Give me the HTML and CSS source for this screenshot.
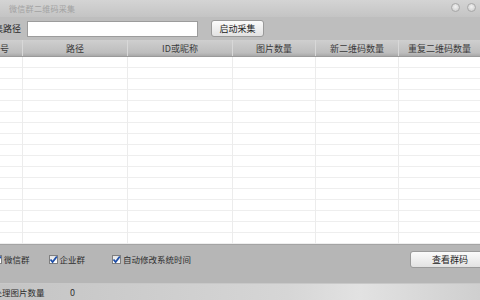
FILE: index.html
```html
<!DOCTYPE html>
<html lang="zh-CN">
<head>
    <meta charset="UTF-8">
    <title>微信群二维码采集</title>
    <link rel="stylesheet" href="styles.css">
</head>
<body>
    <div class="window">
        <div class="titlebar">
            <span class="title">微信群二维码采集</span>
            <div class="win-btns">
                <span class="win-btn"></span>
                <span class="win-btn"></span>
            </div>
        </div>

        <div class="toolbar">
            <label class="path-label" for="path">采集路径</label>
            <input type="text" id="path" class="path-input">
            <button class="btn start-btn">启动采集</button>
        </div>

        <div class="grid">
            <div class="grid-head">
                <div class="col c1">序号</div>
                <div class="col c2">路径</div>
                <div class="col c3">ID或昵称</div>
                <div class="col c4">图片数量</div>
                <div class="col c5">新二维码数量</div>
                <div class="col c6">重复二维码数量</div>
            </div>
            <div class="grid-body">
                <div class="col c1"></div>
                <div class="col c2"></div>
                <div class="col c3"></div>
                <div class="col c4"></div>
                <div class="col c5"></div>
                <div class="col c6"></div>
            </div>
        </div>

        <div class="options">
            <label class="check wechat">
                <span class="box"><svg viewBox="0 0 9 9" width="9" height="9"><path d="M1.5 4.5 L3.6 7 L7.8 1.5" fill="none" stroke="#1f4fa8" stroke-width="1.8"/></svg></span>
                微信群
            </label>
            <label class="check company">
                <span class="box"><svg viewBox="0 0 9 9" width="9" height="9"><path d="M1.5 4.5 L3.6 7 L7.8 1.5" fill="none" stroke="#1f4fa8" stroke-width="1.8"/></svg></span>
                企业群
            </label>
            <label class="check autotime">
                <span class="box"><svg viewBox="0 0 9 9" width="9" height="9"><path d="M1.5 4.5 L3.6 7 L7.8 1.5" fill="none" stroke="#1f4fa8" stroke-width="1.8"/></svg></span>
                自动修改系统时间
            </label>
            <button class="btn view-btn">查看群码</button>
        </div>

        <div class="statusbar">
            <span class="status-label">已处理图片数量</span>
            <span class="status-value">0</span>
        </div>
    </div>
</body>
</html>
```

FILE: styles.css
```css
* {
    margin: 0;
    padding: 0;
    box-sizing: border-box;
    font-family: "Noto Sans CJK SC", "Liberation Sans", sans-serif;
}

body {
    width: 480px;
    height: 300px;
    overflow: hidden;
    background: #bdbdbd;
    color: #333333;
}

.window {
    display: flex;
    flex-direction: column;
    height: 300px;
    overflow: hidden;
}

/* Title bar */
.titlebar {
    height: 17px;
    display: flex;
    align-items: center;
    justify-content: space-between;
    padding: 0 4px 0 9px;
    background: linear-gradient(to bottom, #d4d4d4, #c4c4c4);
}

.title {
    font-size: 8px;
    color: #a2a2a2;
    letter-spacing: 0.3px;
}

.win-btns {
    display: flex;
    gap: 7px;
    margin-top: -3px;
}

.win-btn {
    width: 9px;
    height: 9px;
    border-radius: 50%;
    border: 1px solid #a8a8a8;
    background: radial-gradient(circle at 50% 40%, #f2f2f2, #c8c8c8);
}

/* Path row */
.toolbar {
    height: 23px;
    display: flex;
    align-items: center;
    background: #bebebe;
}

.path-label {
    font-size: 9px;
    color: #2a2a2a;
    margin-left: -15px;
    width: 36px;
    flex-shrink: 0;
    white-space: nowrap;
}

.path-input {
    width: 171px;
    height: 16px;
    margin-left: 6px;
    border: 1px solid #9c9c9c;
    background: #ffffff;
}

.btn {
    height: 17px;
    border: 1px solid #9a9a9a;
    border-radius: 3px;
    background: linear-gradient(to bottom, #fbfbfb, #e2e2e2);
    font-size: 9px;
    color: #222222;
}

.start-btn {
    width: 53px;
    margin-left: 13px;
}

/* Table */
.grid {
    flex: 1;
    display: flex;
    flex-direction: column;
    background: #ffffff;
}

.grid-head {
    height: 17px;
    display: flex;
    background: linear-gradient(to bottom, #cfcfcf, #bdbdbd 80%, #a9a9a9);
    border-bottom: 1px solid #9a9a9a;
}

.grid-head .col {
    display: flex;
    align-items: center;
    justify-content: center;
    font-size: 9px;
    color: #3a3a3a;
    border-right: 1px solid #d8d8d8;
    white-space: nowrap;
    overflow: hidden;
}

.grid-head .c1 {
    justify-content: flex-end;
    padding-right: 13px;
}

.grid-body {
    flex: 1;
    display: flex;
    background: repeating-linear-gradient(to bottom, #ffffff 0, #ffffff 10px, #eeeeee 10px, #eeeeee 11px);
}

.grid-body .col {
    border-right: 1px solid #ececec;
}

.c1 { width: 23px; }
.c2 { width: 105px; }
.c3 { width: 105px; }
.c4 { width: 83px; }
.c5 { width: 83px; }
.c6 { width: 81px; border-right: none !important; }

/* Options panel */
.options {
    height: 39px;
    display: flex;
    align-items: center;
    background: #b6b6b6;
    border-top: 1px solid #a4a4a4;
    padding-bottom: 10px;
}

.check {
    display: flex;
    align-items: center;
    gap: 2px;
    font-size: 8.5px;
    color: #2e2e2e;
    white-space: nowrap;
    flex-shrink: 0;
}

.check .box {
    width: 9px;
    height: 9px;
    display: flex;
    border: 1px solid #7f7f7f;
    background: linear-gradient(to bottom, #e4e4e4, #ffffff);
}

.check .box svg {
    margin: -1px;
}

.wechat { margin-left: -7px; }
.company { margin-left: 19px; }
.autotime { margin-left: 27px; }

.view-btn {
    width: 80px;
    height: 17px;
    margin-left: auto;
    margin-right: -10px;
    flex-shrink: 0;
}

/* Status bar */
.statusbar {
    height: 17px;
    display: flex;
    align-items: center;
    background: linear-gradient(to right, #c4c4c4, #d6d6d6 60%, #e2e2e2 75%, #cfcfcf);
    border-top: 1px solid #c8c8c8;
}

.status-label {
    font-size: 8.5px;
    color: #2e2e2e;
    margin-left: -15px;
    width: 85px;
    flex-shrink: 0;
    white-space: nowrap;
}

.status-value {
    font-size: 9px;
    color: #333333;
}
```
